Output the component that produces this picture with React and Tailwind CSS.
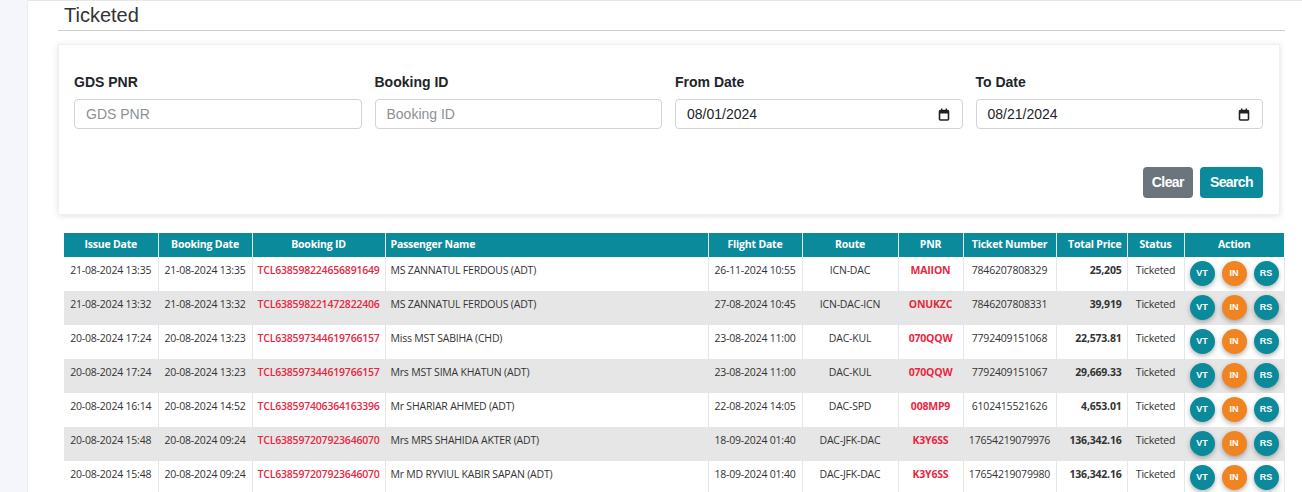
import React from 'react';

const rows = [
  { issue: '21-08-2024 13:35', booking: '21-08-2024 13:35', id: 'TCL638598224656891649', name: 'MS ZANNATUL FERDOUS (ADT)', flight: '26-11-2024 10:55', route: 'ICN-DAC', pnr: 'MAIION', ticket: '7846207808329', price: '25,205' },
  { issue: '21-08-2024 13:32', booking: '21-08-2024 13:32', id: 'TCL638598221472822406', name: 'MS ZANNATUL FERDOUS (ADT)', flight: '27-08-2024 10:45', route: 'ICN-DAC-ICN', pnr: 'ONUKZC', ticket: '7846207808331', price: '39,919' },
  { issue: '20-08-2024 17:24', booking: '20-08-2024 13:23', id: 'TCL638597344619766157', name: 'Miss MST SABIHA (CHD)', flight: '23-08-2024 11:00', route: 'DAC-KUL', pnr: '070QQW', ticket: '7792409151068', price: '22,573.81' },
  { issue: '20-08-2024 17:24', booking: '20-08-2024 13:23', id: 'TCL638597344619766157', name: 'Mrs MST SIMA KHATUN (ADT)', flight: '23-08-2024 11:00', route: 'DAC-KUL', pnr: '070QQW', ticket: '7792409151067', price: '29,669.33' },
  { issue: '20-08-2024 16:14', booking: '20-08-2024 14:52', id: 'TCL638597406364163396', name: 'Mr SHARIAR AHMED (ADT)', flight: '22-08-2024 14:05', route: 'DAC-SPD', pnr: '008MP9', ticket: '6102415521626', price: '4,653.01' },
  { issue: '20-08-2024 15:48', booking: '20-08-2024 09:24', id: 'TCL638597207923646070', name: 'Mrs MRS SHAHIDA AKTER (ADT)', flight: '18-09-2024 01:40', route: 'DAC-JFK-DAC', pnr: 'K3Y6SS', ticket: '17654219079976', price: '136,342.16' },
  { issue: '20-08-2024 15:48', booking: '20-08-2024 09:24', id: 'TCL638597207923646070', name: 'Mr MD RYVIUL KABIR SAPAN (ADT)', flight: '18-09-2024 01:40', route: 'DAC-JFK-DAC', pnr: 'K3Y6SS', ticket: '17654219079980', price: '136,342.16' },
];

const Field = ({ label, placeholder, value, date }) => (
  <div className="flex flex-col">
    <label className="text-[14px] font-bold text-[#212529] mb-[7px] leading-[20px]">{label}</label>
    <div className="h-[30px] border border-[#ced4da] rounded-[4px] flex items-center justify-between px-[11px] bg-white">
      <span className={value ? 'text-[14px] text-[#212529]' : 'text-[14px] text-[#8c9196]'}>{value || placeholder}</span>
      {date && (
        <svg width="12" height="13" viewBox="0 0 12 13" className="mr-[1px]">
          <rect x="1.5" y="2.5" width="9" height="9.5" rx="1" fill="none" stroke="#222" strokeWidth="1.6" />
          <rect x="1.5" y="2.5" width="9" height="3" fill="#222" />
          <rect x="3" y="0.5" width="1.4" height="2.5" fill="#222" />
          <rect x="7.6" y="0.5" width="1.4" height="2.5" fill="#222" />
        </svg>
      )}
    </div>
  </div>
);

const ActionBtn = ({ label, orange }) => (
  <span
    className={`w-[25px] h-[25px] rounded-full flex items-center justify-center text-white text-[9px] font-bold shadow-[0_2px_5px_rgba(0,0,0,0.3)] ${orange ? 'bg-[#f08421]' : 'bg-[#0b8a9b]'}`}
    style={{ fontFamily: '"Liberation Sans", Arial, sans-serif' }}
  >
    {label}
  </span>
);

const th = 'border-r border-[#e3e6ea] px-[5px] py-[4px] font-bold text-[10.5px] tracking-[-0.2px] text-white';
const td = 'border-r border-[#e3e6ea] px-[5px] pt-[6px] pb-[4px] align-top text-[10.5px] tracking-[-0.2px] text-[#333]';

export default function App() {
  return (
    <div className="flex min-h-[492px] bg-white" style={{ fontFamily: '"Liberation Sans", Arial, sans-serif' }}>
      <div className="w-[28px] shrink-0 bg-[#f4f6fb] border-r border-[#eceff4]" />
      <div className="flex-1 border-t border-[#e6e6e6] pl-[30px] pr-[17px]">
        <div className="pl-[6px] border-b border-[#cfcfcf] pt-[3px] pb-[3px]">
          <h1 className="text-[20px] text-[#333] leading-[23px]">Ticketed</h1>
        </div>

        <div className="mt-[13px] mr-[5px] bg-white shadow-[0_1px_6px_rgba(0,0,0,0.12)] border border-[#f0f0f0] pt-[27px] pb-[16px] pl-[15px] pr-[16px]">
          <div className="grid grid-cols-4 gap-x-[13px]">
            <Field label="GDS PNR" placeholder="GDS PNR" />
            <Field label="Booking ID" placeholder="Booking ID" />
            <Field label="From Date" value="08/01/2024" date />
            <Field label="To Date" value="08/21/2024" date />
          </div>
          <div className="flex justify-end gap-[7px] mt-[38px]">
            <button className="h-[31px] px-[9px] rounded-[4px] bg-[#6c757d] text-white text-[14px] font-bold tracking-[-0.6px]">
              Clear
            </button>
            <button className="h-[31px] px-[10px] rounded-[4px] bg-[#0b8a9b] text-white text-[14px] font-bold tracking-[-0.6px]">
              Search
            </button>
          </div>
        </div>

        <div className="mt-[18px] pl-[6px]" style={{ fontFamily: '"Open Sans", "Noto Sans", sans-serif' }}>
          <table className="w-[1220px] border-collapse table-fixed">
            <colgroup>
              <col className="w-[94px]" />
              <col className="w-[94px]" />
              <col className="w-[133px]" />
              <col className="w-[323px]" />
              <col className="w-[94px]" />
              <col className="w-[96px]" />
              <col className="w-[65px]" />
              <col className="w-[93px]" />
              <col className="w-[71px]" />
              <col className="w-[57px]" />
              <col className="w-[100px]" />
            </colgroup>
            <thead>
              <tr className="bg-[#0b8a9b] h-[23px]">
                <th className={`${th} text-center`}>Issue Date</th>
                <th className={`${th} text-center`}>Booking Date</th>
                <th className={`${th} text-center`}>Booking ID</th>
                <th className={`${th} text-left`}>Passenger Name</th>
                <th className={`${th} text-center`}>Flight Date</th>
                <th className={`${th} text-center`}>Route</th>
                <th className={`${th} text-center`}>PNR</th>
                <th className={`${th} text-center`}>Ticket Number</th>
                <th className={`${th} text-right`}>Total Price</th>
                <th className={`${th} text-center`}>Status</th>
                <th className={`${th} text-center border-r-0`}>Action</th>
              </tr>
            </thead>
            <tbody>
              {rows.map((r, i) => (
                <tr key={i} className={`h-[34px] ${i % 2 === 1 ? 'bg-[#e6e6e6]' : 'bg-white'}`}>
                  <td className={`${td} text-center whitespace-nowrap`}>{r.issue}</td>
                  <td className={`${td} text-center whitespace-nowrap`}>{r.booking}</td>
                  <td className={`${td} text-center whitespace-nowrap font-semibold text-[#e8283f]`}>{r.id}</td>
                  <td className={`${td} text-left whitespace-nowrap`}>{r.name}</td>
                  <td className={`${td} text-center whitespace-nowrap`}>{r.flight}</td>
                  <td className={`${td} text-center whitespace-nowrap`}>{r.route}</td>
                  <td className={`${td} text-center font-bold text-[#e8283f]`}>{r.pnr}</td>
                  <td className={`${td} text-center`}>{r.ticket}</td>
                  <td className={`${td} text-right font-bold text-[#222]`}>{r.price}</td>
                  <td className={`${td} text-center`}>Ticketed</td>
                  <td className="px-[4px] py-[4px] align-middle border-r border-[#e3e6ea]">
                    <div className="flex justify-center gap-[7px] h-[25px]">
                      <ActionBtn label="VT" />
                      <ActionBtn label="IN" orange />
                      <ActionBtn label="RS" />
                    </div>
                  </td>
                </tr>
              ))}
            </tbody>
          </table>
        </div>
      </div>
    </div>
  );
}
